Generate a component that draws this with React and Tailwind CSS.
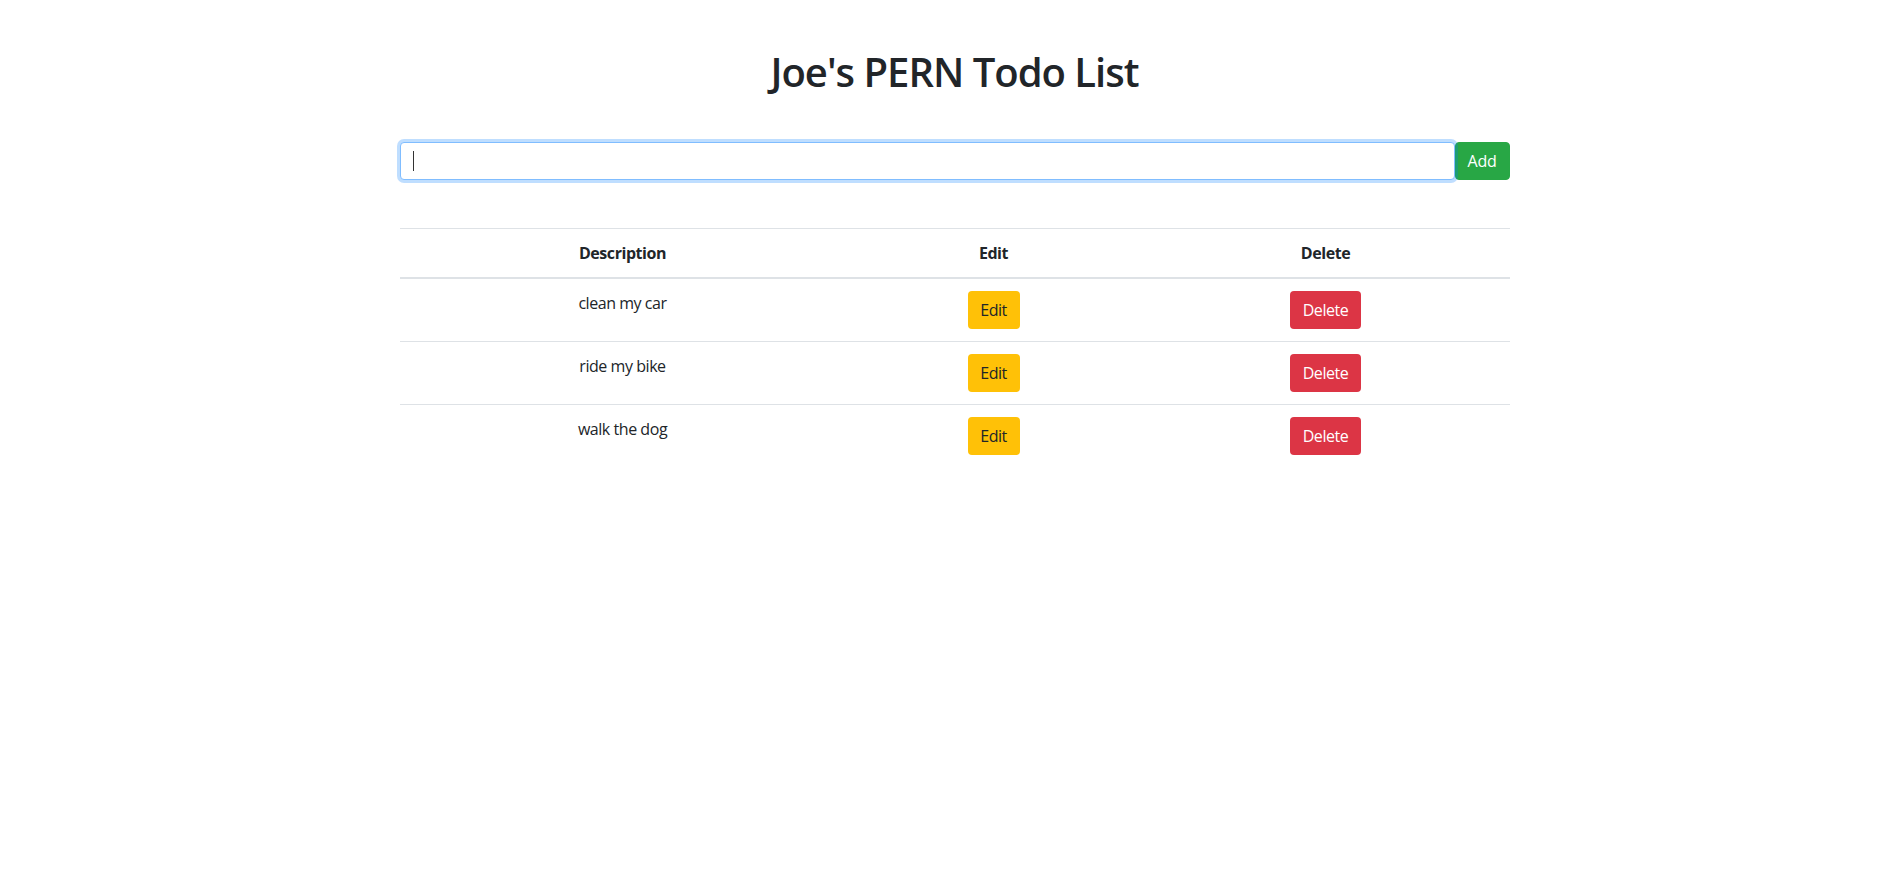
import React from "react";

const todos = ["clean my car", "ride my bike", "walk the dog"];

export default function App() {
  return (
    <div
      className="min-h-screen bg-white text-[#212529] text-[16px] leading-[24px]"
      style={{ fontFamily: '"Open Sans", "Noto Sans", sans-serif' }}
    >
      <div className="mx-auto w-[1116px] pl-[6px]">
        <h1 className="pt-[48px] text-center text-[40px] leading-[48px] font-semibold tracking-[-1px]">
          Joe's PERN Todo List
        </h1>
        <form className="mt-[46px] flex" onSubmit={(e) => e.preventDefault()}>
          <div className="relative flex flex-1">
            <input
              type="text"
              className="h-[38px] w-full rounded-[4px] border border-[#80bdff] bg-white px-[12px] text-[16px] text-[#495057] outline-none shadow-[0_0_0_3px_rgba(0,123,255,0.25)]"
            />
            <span className="pointer-events-none absolute left-[13px] top-[9px] h-[20px] w-[1px] bg-[#333]" />
          </div>
          <button
            type="submit"
            className="h-[38px] w-[55px] rounded-[4px] border border-[#28a745] bg-[#28a745] text-[16px] tracking-[-0.3px] text-white"
          >
            Add
          </button>
        </form>
        <table className="mt-[48px] w-full border-collapse text-center tracking-[-0.45px]">
          <thead>
            <tr className="border-t border-[#dee2e6]">
              <th className="w-[446px] border-b-2 border-[#dee2e6] p-[12px] font-bold">Description</th>
              <th className="w-[296px] border-b-2 border-[#dee2e6] p-[12px] font-bold">Edit</th>
              <th className="border-b-2 border-[#dee2e6] p-[12px] font-bold">Delete</th>
            </tr>
          </thead>
          <tbody>
            {todos.map((t, i) => (
              <tr key={t} className={i < todos.length - 1 ? "border-b border-[#dee2e6]" : ""}>
                <td className="p-[12px] align-top">{t}</td>
                <td className="p-[12px] align-top">
                  <button className="h-[38px] w-[52px] rounded-[4px] bg-[#ffc107] text-[#212529]">Edit</button>
                </td>
                <td className="p-[12px] align-top">
                  <button className="h-[38px] w-[71px] rounded-[4px] bg-[#dc3545] text-white">Delete</button>
                </td>
              </tr>
            ))}
          </tbody>
        </table>
      </div>
    </div>
  );
}
